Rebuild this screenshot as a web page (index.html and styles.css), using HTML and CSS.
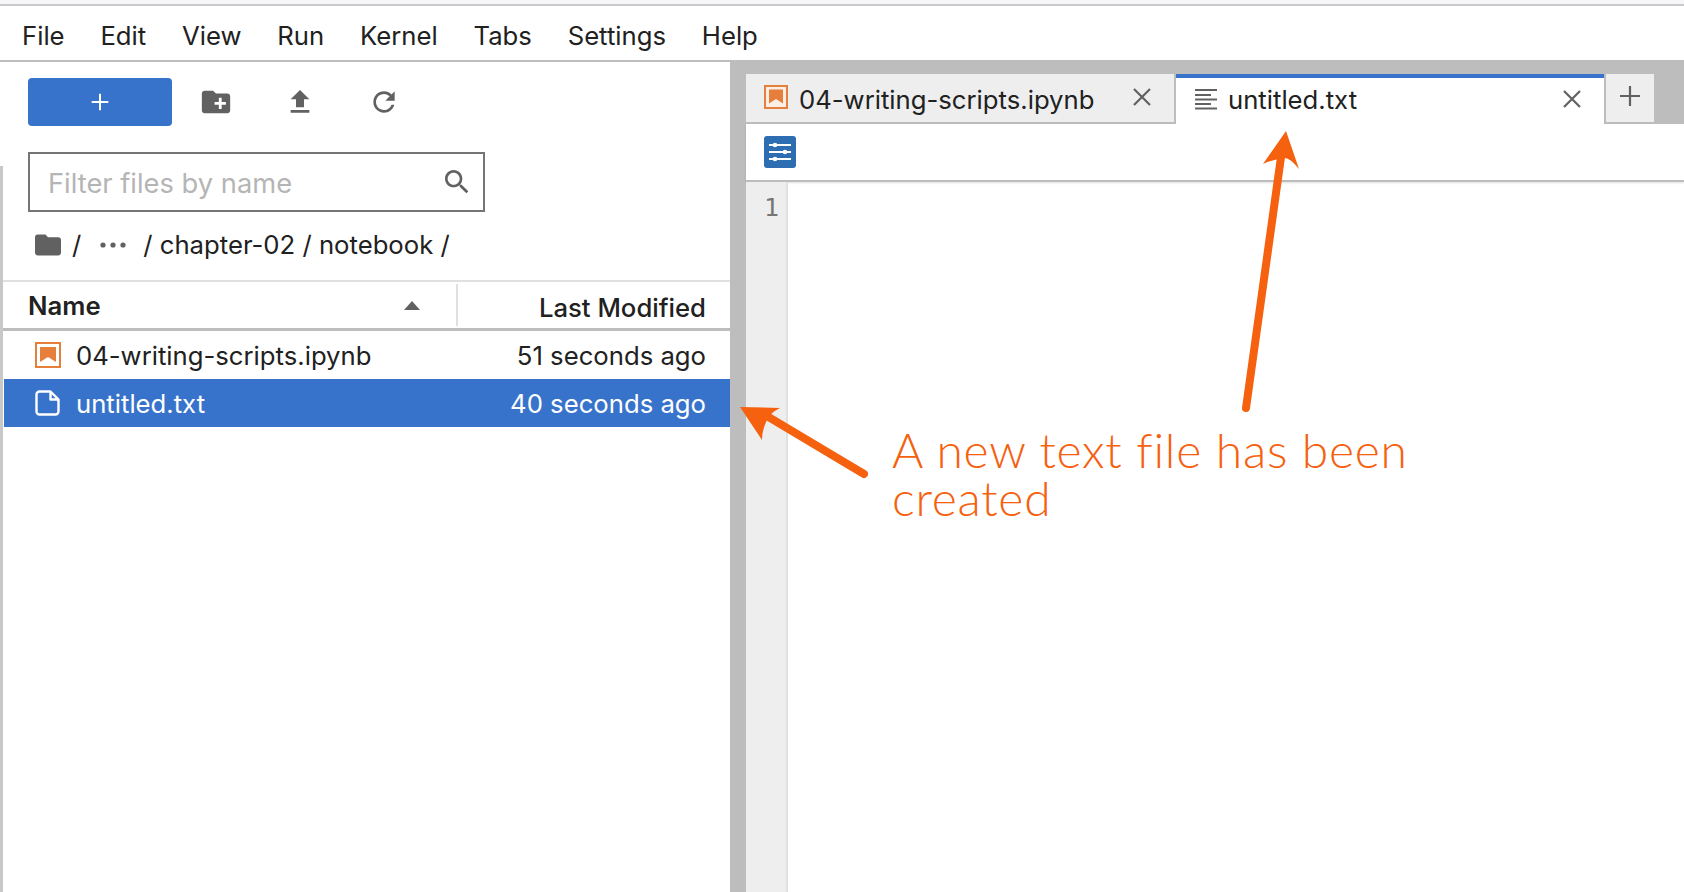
FILE: index.html
```html
<!DOCTYPE html>
<html lang="en">
<head>
    <meta charset="UTF-8">
    <title>JupyterLab</title>
    <link rel="stylesheet" href="styles.css">
</head>
<body>
    <div class="topline"></div>
    <nav class="menubar">
        <span>File</span><span>Edit</span><span>View</span><span>Run</span><span>Kernel</span><span>Tabs</span><span>Settings</span><span>Help</span>
    </nav>
    <div class="main">
        <aside class="sidebar">
            <div class="toolbar">
                <button class="new-btn">
                    <svg viewBox="0 0 24 24" width="24" height="24"><path d="M12 2v20M2 12h20" stroke="#fff" stroke-width="2.4" fill="none"/></svg>
                </button>
                <span class="tool first">
                    <svg viewBox="0 0 24 24" width="34" height="34"><path d="M20 6h-8l-2-2H4c-1.11 0-1.99.89-1.99 2L2 18c0 1.11.89 2 2 2h16c1.11 0 2-.89 2-2V8c0-1.11-.89-2-2-2zm-1 8h-3v3h-2v-3h-3v-2h3V9h2v3h3v2z"/></svg>
                </span>
                <span class="tool">
                    <svg viewBox="0 0 24 24" width="32" height="32"><path d="M9 16h6v-6h4l-7-7-7 7h4zm-4 2h14v2H5z"/></svg>
                </span>
                <span class="tool">
                    <svg viewBox="0 0 24 24" width="32" height="32"><path d="M17.65 6.35C16.2 4.9 14.21 4 12 4c-4.42 0-7.99 3.58-7.99 8s3.57 8 7.99 8c3.73 0 6.84-2.55 7.73-6h-2.08c-.82 2.33-3.04 4-5.65 4-3.31 0-6-2.69-6-6s2.69-6 6-6c1.66 0 3.14.69 4.22 1.78L13 11h7V4l-2.35 2.35z"/></svg>
                </span>
            </div>
            <div class="filter">
                <span class="placeholder">Filter files by name</span>
                <svg viewBox="0 0 24 24" width="32" height="32"><path d="M15.5 14h-.79l-.28-.27C15.41 12.59 16 11.11 16 9.5 16 5.91 13.09 3 9.5 3S3 5.91 3 9.5 5.91 16 9.5 16c1.61 0 3.09-.59 4.23-1.57l.27.28v.79l5 4.99L20.49 19l-4.99-5zm-6 0C7.01 14 5 11.99 5 9.5S7.01 5 9.5 5 14 7.01 14 9.5 11.99 14 9.5 14z"/></svg>
            </div>
            <div class="crumbs">
                <svg viewBox="2 4 20 16" width="26" height="22"><path d="M10 4H4c-1.1 0-1.99.9-1.99 2L2 18c0 1.1.9 2 2 2h16c1.1 0 2-.9 2-2V8c0-1.1-.9-2-2-2h-8l-2-2z"/></svg>
                <span class="slash">/</span>
                <svg class="dots" viewBox="0 0 26 6" width="26" height="6"><circle cx="3" cy="3" r="2.6"/><circle cx="13" cy="3" r="2.6"/><circle cx="23" cy="3" r="2.6"/></svg>
                <span class="path">/ chapter-02 / notebook /</span>
            </div>
            <div class="list-head">
                <div class="col-name">
                    <span>Name</span>
                    <svg viewBox="0 0 16 9" width="16" height="9"><path d="M8 0l8 9H0z"/></svg>
                </div>
                <div class="col-date">Last Modified</div>
            </div>
            <div class="row">
                <svg class="file-icon" viewBox="0 0 26 26" width="26" height="26"><rect x="1" y="1" width="24" height="24" fill="none" stroke="#e67e3c" stroke-width="2"/><path d="M5 5h16v15l-8-5-8 5z" fill="#e67e3c"/></svg>
                <span class="fname">04-writing-scripts.ipynb</span>
                <span class="fdate">51 seconds ago</span>
            </div>
            <div class="row selected">
                <svg class="file-icon" viewBox="0 0 26 26" width="26" height="26"><path d="M4.5 1.5h11l8 8v12a3 3 0 0 1-3 3h-16a3 3 0 0 1-3-3v-17a3 3 0 0 1 3-3zM15.5 1.5v8h8" fill="none" stroke="#fff" stroke-width="2.4" stroke-linejoin="round"/></svg>
                <span class="fname">untitled.txt</span>
                <span class="fdate">40 seconds ago</span>
            </div>
        </aside>
        <div class="splitter"></div>
        <section class="dock">
            <div class="tabbar">
                <div class="tab">
                    <svg class="tab-icon" viewBox="0 0 24 24" width="24" height="24"><rect x="1" y="1" width="22" height="22" fill="#fbeee5" stroke="#e67e3c" stroke-width="2"/><path d="M5 4.500h14v14l-7-4.500-7 4.500z" fill="#e67e3c"/></svg>
                    <span class="tab-label">04-writing-scripts.ipynb</span>
                    <svg class="tab-close" viewBox="0 0 18 18" width="18" height="18"><path d="M1 1l16 16M17 1L1 17" stroke="#616161" stroke-width="2.200" fill="none"/></svg>
                </div>
                <div class="tab active">
                    <svg class="tab-icon" viewBox="0 0 22 22" width="22" height="22"><path d="M0 2h22M0 7h16M0 11.500h22M0 16h16M0 20.500h22" stroke="#616161" stroke-width="2" fill="none"/></svg>
                    <span class="tab-label">untitled.txt</span>
                    <svg class="tab-close" viewBox="0 0 18 18" width="18" height="18"><path d="M1 1l16 16M17 1L1 17" stroke="#616161" stroke-width="2.200" fill="none"/></svg>
                </div>
                <div class="tab-add">
                    <svg viewBox="0 0 20 20" width="20" height="20"><path d="M10 0v20M0 10h20" stroke="#616161" stroke-width="2.200" fill="none"/></svg>
                </div>
            </div>
            <div class="editor-bar">
                <span class="settings-btn">
                    <svg viewBox="0 0 32 32" width="32" height="32"><path d="M5 9h22M5 16h22M5 23h22" stroke="#fff" stroke-width="1.800"/><circle cx="11" cy="9" r="2.300" fill="#fff"/><circle cx="21" cy="16" r="2.300" fill="#fff"/><circle cx="11" cy="23" r="2.300" fill="#fff"/></svg>
                </span>
            </div>
            <div class="editor">
                <div class="gutter">1</div>
            </div>
        </section>
    </div>

    <!-- callouts drawn over the screenshot -->
    <svg class="arrows" viewBox="0 0 1684 892" width="1684" height="892">
        <path d="M1246 408L1282 150" stroke="#f5610f" stroke-width="8" stroke-linecap="round" fill="none"/>
        <path d="M1286 131L1299 169Q1290 158 1285 158Q1274 159 1263 164z" fill="#f5610f"/>
        <path d="M864 474L760 412" stroke="#f5610f" stroke-width="8" stroke-linecap="round" fill="none"/>
        <path d="M740 407L780 408Q770 413 767 420Q762 430 762 440z" fill="#f5610f"/>
    </svg>
    <div class="callout">A new text file has been<br>created</div>
</body>
</html>
```

FILE: styles.css
```css
* {
    box-sizing: border-box;
}
body {
    margin: 0;
    width: 1684px;
    height: 892px;
    overflow: hidden;
    position: relative;
    background: #fff;
    color: #212121;
    font-family: Inter, "Noto Sans", sans-serif;
    font-size: 25.7px;
}
svg {
    display: block;
    flex: none;
    fill: #616161;
}

.topline {
    height: 6px;
    background: #f6f6f8;
    border-bottom: 2px solid #c9c9c9;
}
.menubar {
    height: 56px;
    display: flex;
    align-items: center;
    gap: 35.8px;
    padding: 5px 0 0 22px;
    border-bottom: 2px solid #bdbdbd;
}

.main {
    display: flex;
    height: 830px;
}
.sidebar {
    width: 730px;
    position: relative;
}
/* thin edge of the pane behind the sidebar */
.sidebar::before {
    content: "";
    position: absolute;
    left: 0;
    top: 104px;
    bottom: 0;
    width: 3px;
    background: #c8c8c8;
}
.splitter {
    width: 16px;
    background: #bdbdbd;
}

.toolbar {
    display: flex;
    align-items: center;
    padding: 16px 0 0 28px;
    height: 64px;
}
.new-btn {
    width: 144px;
    height: 48px;
    border: 0;
    border-radius: 4px;
    background: #3873cb;
    display: flex;
    align-items: center;
    justify-content: center;
    padding: 0;
}
.new-btn svg {
    width: 20px;
    height: 20px;
}
.tool {
    width: 84px;
    display: flex;
    justify-content: center;
}
.tool.first {
    margin-left: 2px;
}

.filter {
    margin: 26px 0 0 28px;
    width: 457px;
    height: 60px;
    border: 2px solid #757575;
    display: flex;
    align-items: center;
    justify-content: space-between;
    padding: 0 10px 0 18px;
}
.placeholder {
    color: #b5b5b5;
    font-size: 27.3px;
    padding-top: 2px;
}

.crumbs {
    display: flex;
    align-items: center;
    height: 68px;
    padding: 0 0 3px 35px;
}
.slash {
    margin-left: 11px;
}
.dots {
    margin-left: 19px;
    fill: #616161;
}
.path {
    margin-left: 17px;
}

.list-head {
    display: flex;
    margin-left: 3px;
    height: 51px;
    border-top: 2px solid #e0e0e0;
    border-bottom: 3px solid #bdbdbd;
}
.col-name {
    width: 455px;
    display: flex;
    align-items: center;
    justify-content: space-between;
    padding: 1px 36px 0 25px;
    font-weight: 600;
    border-right: 2px solid #e0e0e0;
    margin: 2px 0;
}
.col-date {
    flex: 1;
    display: flex;
    align-items: center;
    justify-content: flex-end;
    padding: 5px 24px 0 0;
    font-weight: 500;
}

.row {
    display: flex;
    align-items: center;
    height: 48px;
    margin-left: 4px;
    padding: 0 24px 0 31px;
}
.row.selected {
    background: #3873cb;
    color: #fff;
}
.file-icon {
    margin-right: 15px;
}
.fname {
    flex: 1;
    padding-top: 1px;
}
.fdate {
    padding-top: 1px;
}

.dock {
    flex: 1;
    display: flex;
    flex-direction: column;
    background: #fff;
}
.tabbar {
    display: flex;
    height: 62px;
    padding-top: 12px;
    background: #bdbdbd;
}
.tab {
    width: 430px;
    height: 50px;
    display: flex;
    align-items: center;
    padding: 0 23px 2px 18px;
    background: #eee;
    border-right: 2px solid #bdbdbd;
    border-bottom: 2px solid #bdbdbd;
}
.tab .tab-label {
    padding-top: 5px;
}
.tab.active {
    width: 428px;
    height: 50px;
    background: #fff;
    border-top: 4px solid #3873cb;
    border-right: 0;
    border-bottom: 0;
    padding: 0 23px 4px 19px;
}
.tab-icon {
    margin-right: 11px;
}
.tab.active .tab-label {
    padding-top: 0;
}
.tab-label {
    flex: 1;
}
.tab-add {
    width: 50px;
    height: 50px;
    background: #eee;
    border-left: 2px solid #bdbdbd;
    border-bottom: 2px solid #bdbdbd;
    display: flex;
    align-items: center;
    justify-content: center;
    padding: 0 0 4px 0;
}
.editor-bar {
    height: 58px;
    display: flex;
    align-items: center;
    padding: 0 0 0 18px;
    border-bottom: 2px solid #bdbdbd;
    box-shadow: 0 1px 2px rgba(0, 0, 0, 0.12);
}
.settings-btn {
    width: 32px;
    height: 32px;
    border-radius: 3px;
    background: #2d6eb3;
}
.editor {
    flex: 1;
    display: flex;
}
.gutter {
    width: 42px;
    background: #eee;
    border-right: 2px solid #e0e0e0;
    color: #757575;
    font-family: "DejaVu Sans Mono", monospace;
    font-size: 25px;
    line-height: 28px;
    padding: 12px 7px 0 0;
    text-align: right;
}

.arrows {
    position: absolute;
    left: 0;
    top: 0;
    pointer-events: none;
}
.callout {
    position: absolute;
    left: 892px;
    top: 426px;
    color: #f5610f;
    font-family: Lato, sans-serif;
    font-weight: 300;
    font-size: 48px;
    letter-spacing: 0.75px;
    line-height: 48px;
    white-space: nowrap;
}
```
